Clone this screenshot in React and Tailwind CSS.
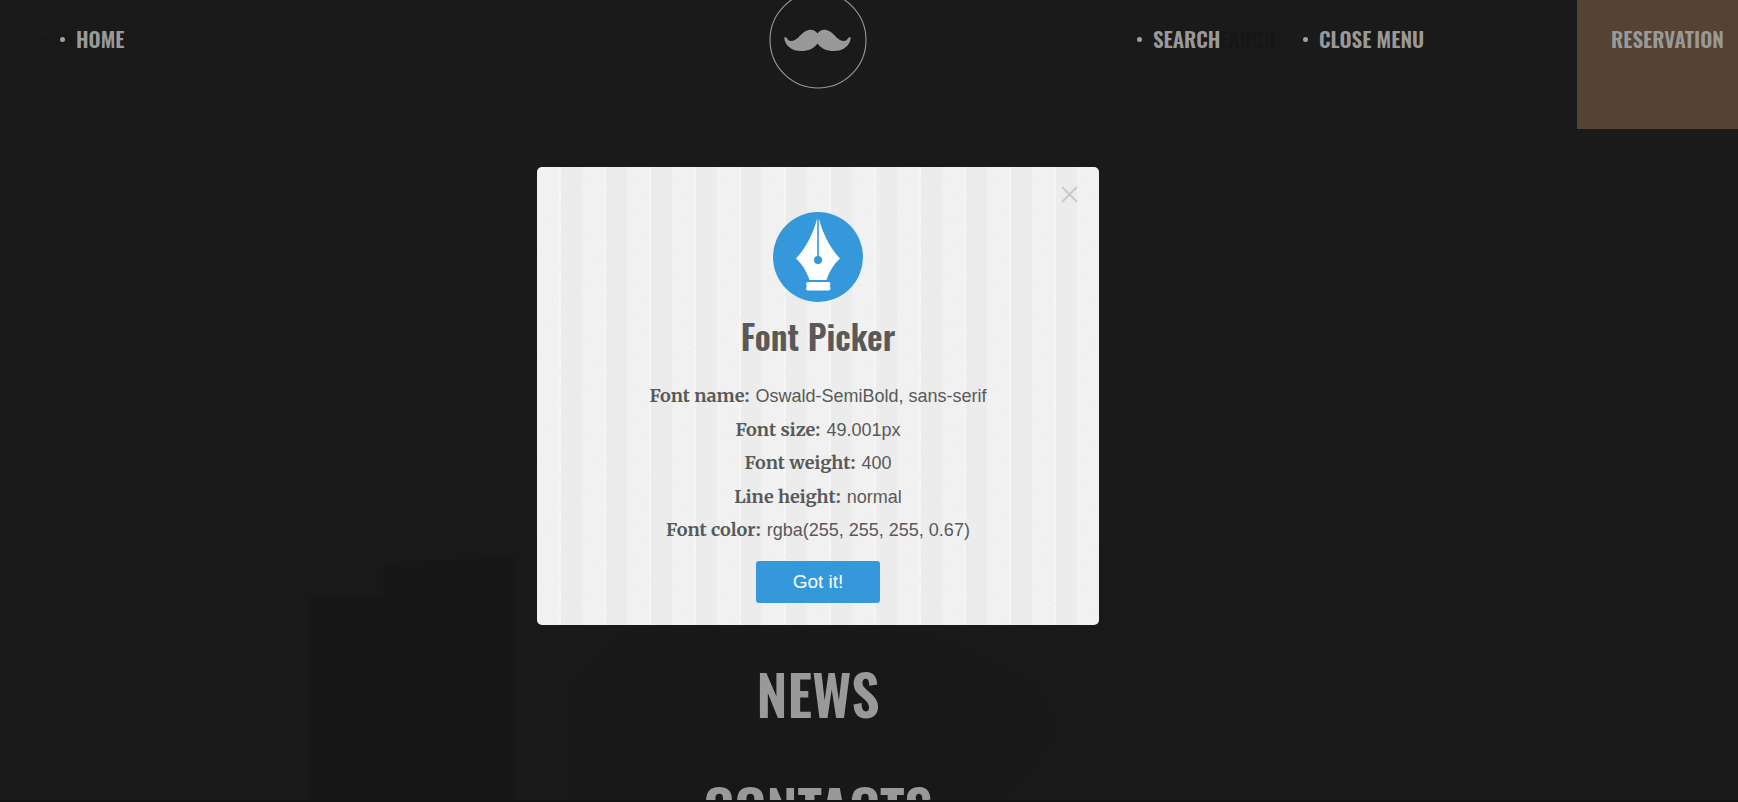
import React from "react";

const oswald = "font-[Oswald,'Roboto_Condensed','Liberation_Sans_Narrow',sans-serif]";
const navText = "text-[21px] leading-8 font-semibold";
const serif = "font-[Merriweather,'Noto_Serif','DejaVu_Serif_Condensed','DejaVu_Serif',serif] font-bold";

function NavLink({ label, className = "" }) {
  return (
    <a href="#" className={`flex items-center gap-[11px] ${className}`}>
      <span className="size-[5px] rounded-full bg-[#a0a0a0]" />
      <span>{label}</span>
    </a>
  );
}

function Logo() {
  return (
    <svg viewBox="0 0 98 98" className="size-[98px]" aria-label="Logo" role="img">
      <circle cx="49" cy="49" r="48" fill="none" stroke="#999" strokeWidth="1.1" />
      <path
        fill="#999"
        d="M48.500 42.500C46 38.500 41 37.500 36 40.500C31 43.500 28 50 22 50C18.500 50 18 46 16.300 46C15 46 15.200 48 15.700 49.500C18 57 25 60 32 60C39.500 60 45 57.500 48.500 52.500C52 57.500 57.500 60 65 60C72 60 79 57 81.300 49.500C81.800 48 82 46 80.700 46C79 46 78.500 50 75 50C69 50 66 43.500 61 40.500C56 37.500 51 38.500 48.500 42.500Z"
      />
    </svg>
  );
}

function PenIcon() {
  return (
    <svg viewBox="0 0 90 90" className="size-[90px]" aria-hidden="true">
      <circle cx="45" cy="45" r="45" fill="#3498db" />
      <path fill="#fff" d="M44 7H46C50 22 57 36 67 46.500C61 52 56 60 53.500 68H36.500C34 60 29 52 23 46.500C33 36 40 22 44 7Z" />
      <path stroke="#3498db" strokeWidth="1.6" d="M45 6V45" />
      <circle cx="45" cy="48" r="4" fill="#3498db" />
      <path fill="#fff" d="M35 70H55.500Q57.500 70 57.500 72Q57.500 73 56.500 74Q57.500 75 57.500 76.500Q57.500 78.500 55.500 78.500H35Q33 78.500 33 76.500Q33 75 34 74Q33 73 33 72Q33 70 35 70Z" />
    </svg>
  );
}

function PaperTexture() {
  return (
    <svg className="h-full w-full" aria-hidden="true">
      <defs>
        <pattern id="paper" width="135" height="103" patternUnits="userSpaceOnUse">
          <path
            fill="none"
            stroke="#e6e6e6"
            strokeLinecap="round"
            d="M6 9l1 1M15 31l1-1M9 52l2 1M18 74v1M4 88l1-1M34 6l1 2M41 24l-1 1M29 38l1 1M36 59v2M42 80l1 1M31 95h1M53 15l1 1M64 42v1M50 67l1-1M61 90l1 1M73 8v1M84 19l1 1M78 35v2M86 54l-1 1M75 71l1 1M82 92v1M97 12l1 1M108 28h1M95 47l1 1M104 66l1-1M99 84v1M118 5l1 2M130 23l-1 1M121 41l1 1M128 60v2M119 77l1 1M126 98h1"
          />
          <path stroke="#f1f1f1" strokeWidth="2" strokeDasharray="2 9" d="M23 0V103M68 4V103M113 2V103" />
        </pattern>
      </defs>
      <rect width="100%" height="100%" fill="url(#paper)" />
    </svg>
  );
}

function FaintPhoto() {
  return (
    <svg viewBox="0 0 1539 264" preserveAspectRatio="none" className="h-full w-full" aria-hidden="true">
      <rect width="1539" height="264" fill="#191919" />
      <path fill="#171717" d="M271 59H345V26L478 20V264H271Z" />
      <path fill="#181818" d="M530 150L610 75L690 60L790 60L930 115L1000 150L1020 200L960 264H530Z" />
      <path fill="#1a1a1a" d="M108 188Q160 184 190 196Q250 192 268 208V264H108Z" />
    </svg>
  );
}

const rows = [
  ["Font name:", "Oswald-SemiBold, sans-serif"],
  ["Font size:", "49.001px"],
  ["Font weight:", "400"],
  ["Line height:", "normal"],
  ["Font color:", "rgba(255, 255, 255, 0.67)"],
];

export default function App() {
  return (
    <div className="relative flex h-screen flex-col overflow-hidden border-b-2 border-[#141314] bg-[#1a1a1a] text-[#999]">
      <div className="absolute top-[537px] right-[161px] bottom-0 left-[38px]">
        <FaintPhoto />
      </div>
      <div className={`absolute top-[23px] left-[39px] text-[#181818] ${oswald} ${navText}`} aria-hidden="true">
        <NavLink label="HOME" className="[&>span:first-child]:bg-[#171717]" />
      </div>
      <div className={`absolute top-[23px] right-[462px] text-[#161616] ${oswald} ${navText}`} aria-hidden="true">
        SEARCH
      </div>

      <header className={`relative grid grid-cols-[minmax(0,1fr)_98px_minmax(0,1fr)_102px] ${oswald} ${navText}`}>
        <nav className="flex items-start pt-[23px] pl-[60px]">
          <NavLink label="HOME" />
        </nav>
        <a href="#" className="-mt-[9px]">
          <Logo />
        </a>
        <div className="col-span-2 flex justify-end">
          <nav className="flex items-start pt-[23px]">
            <NavLink label="SEARCH" className="w-[166px]" />
            <NavLink label="CLOSE MENU" className="w-[274px]" />
          </nav>
          <a href="#" className="h-[129px] w-[161px] shrink-0 bg-[#544332] pt-[23px] pl-[34px]">
            RESERVATION
          </a>
        </div>
      </header>

      <nav className={`relative mt-[506px] flex shrink-0 flex-col items-center pr-[102px] text-[56px] leading-[115px] font-semibold ${oswald}`}>
        <a href="#">NEWS</a>
        <a href="#">CONTACTS</a>
      </nav>

      <div className="absolute inset-0 flex items-start justify-center pt-[167px] pr-[102px]">
        <section
          role="dialog"
          aria-labelledby="dialog-title"
          className="relative flex w-[562px] flex-col items-center overflow-hidden rounded-[5px] bg-[repeating-linear-gradient(90deg,#f1f1f1_0_22px,#f6f6f6_22px_24px,#ececec_24px_45px)] pt-[45px] pb-[22px] text-[#595959]"
        >
          <div className="absolute inset-0">
            <PaperTexture />
          </div>
          <button type="button" aria-label="Close" className="absolute top-[18px] right-5 p-px">
            <svg viewBox="0 0 17 17" className="size-[17px]" aria-hidden="true">
              <path d="M1 1L16 16M16 1L1 16" stroke="#c9c9c9" strokeWidth="1.8" />
            </svg>
          </button>
          <div className="relative flex flex-col items-center">
            <PenIcon />
            <h1 id="dialog-title" className={`mt-[11px] text-[34px] leading-[46px] font-semibold ${oswald}`}>
              Font Picker
            </h1>
            <dl className="mt-5 font-['Liberation_Sans',Arial,sans-serif] text-lg">
              {rows.map(([name, value], i) => (
                <div key={name} className={`flex items-center justify-center gap-[6px] ${i % 2 ? "h-[33px]" : "h-[34px]"}`}>
                  <dt className={serif}>{name}</dt>
                  <dd>{value}</dd>
                </div>
              ))}
            </dl>
            <button
              type="button"
              className="mt-[14px] h-[42px] w-[124px] rounded-[3px] bg-[#3498db] font-['Liberation_Sans',Arial,sans-serif] text-[19px] text-white"
            >
              Got it!
            </button>
          </div>
        </section>
      </div>
    </div>
  );
}
